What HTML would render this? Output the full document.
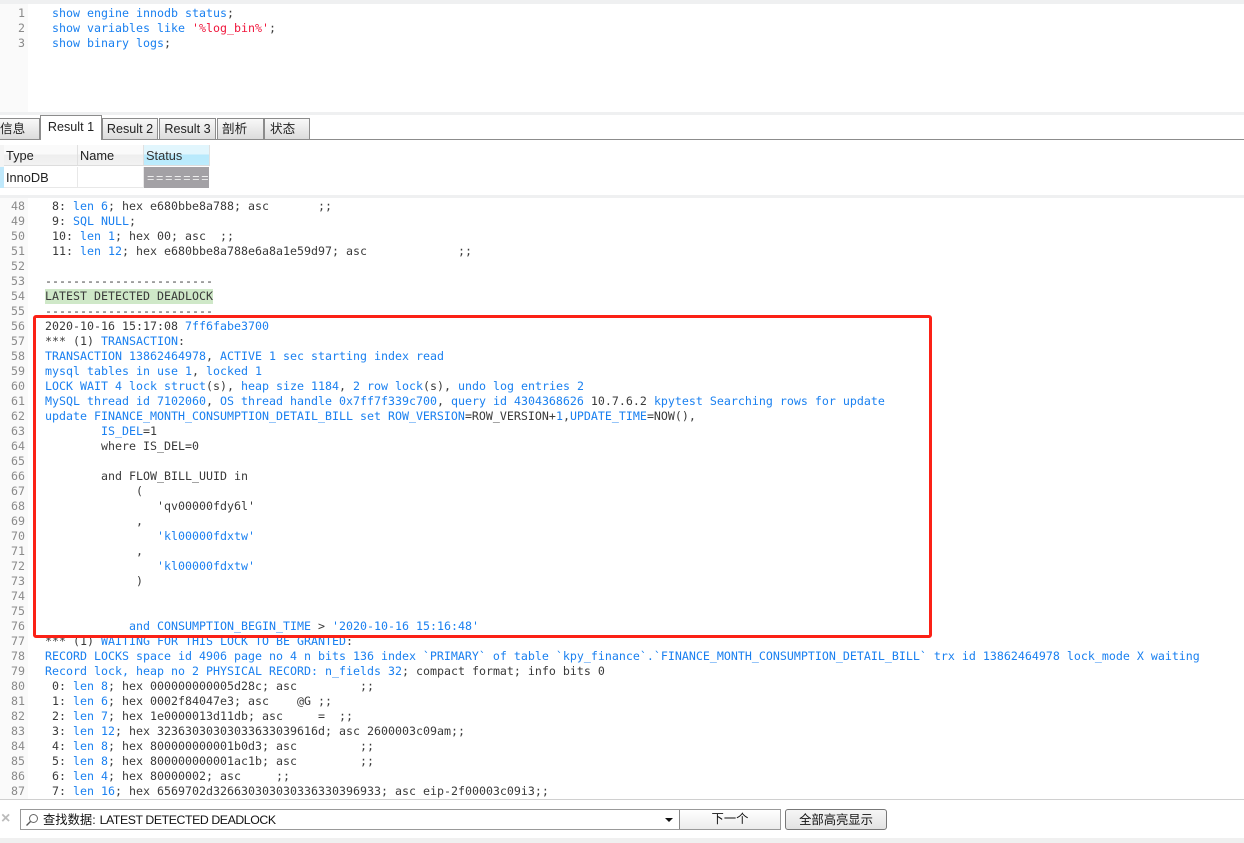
<!DOCTYPE html>
<html><head><meta charset="utf-8"><style>
*{box-sizing:border-box}
html,body{margin:0;padding:0;width:1244px;height:843px;overflow:hidden;background:#fff}
body{position:relative;font-family:"Liberation Sans","Noto Sans CJK SC",sans-serif;color:#222}
.a{position:absolute}
.l{position:absolute;left:45px;height:15px;font:11.63px/15px "DejaVu Sans Mono","Liberation Mono",monospace;white-space:pre;color:#3a3a3a}
.n{position:absolute;left:0;width:25px;text-align:right;font:11.63px/15px "DejaVu Sans Mono","Liberation Mono",monospace;color:#8a8a8a}
.l b{font-weight:normal;color:#1a80f0}
.l i{font-style:normal;color:#f0163c}
.tab{position:absolute;top:118px;height:21px;border:1px solid #8c8c8c;border-bottom:none;background:linear-gradient(#f8f8f8,#dcdcdc);font-size:12.6px;line-height:21px;text-align:center;color:#222;overflow:hidden}
.th{position:absolute;top:145px;height:21px;background:linear-gradient(#fafafa 0,#fafafa 45%,#eeeeee 50%,#f2f2f2);font-size:12.8px;line-height:22px;padding-left:2px;border-right:1px solid #e0e0e0;border-bottom:1px solid #ddd}
</style></head><body>
<div class="a" style="left:0;top:0;width:1244px;height:4px;background:#eff0f1"></div>
<div class="a" style="left:0;top:4px;width:28px;height:108px;background:#fafafa"></div>
<div class="a" style="left:0;top:112px;width:1244px;height:3px;background:#eff0f1"></div>
<div class="n" style="top:6px">1</div><div class="n" style="top:21px">2</div><div class="n" style="top:36px">3</div>
<div class="l" style="left:52px;top:6px"><b>show engine innodb status</b>;</div>
<div class="l" style="left:52px;top:21px"><b>show variables like</b> <i>'%log_bin%'</i>;</div>
<div class="l" style="left:52px;top:36px"><b>show binary logs</b>;</div>

<div class="a" style="left:0;top:139px;width:1244px;height:1px;background:#8c8c8c"></div>
<div class="tab" style="left:-30px;width:70px;text-align:left;padding-left:29px">信息</div>
<div class="tab" style="left:40px;top:115px;width:62px;height:25px;background:#fff;line-height:23px">Result 1</div>
<div class="tab" style="left:102px;width:56px">Result 2</div>
<div class="tab" style="left:159px;width:57px">Result 3</div>
<div class="tab" style="left:217px;width:47px;text-align:left;padding-left:4px">剖析</div>
<div class="tab" style="left:264px;width:46px;text-align:left;padding-left:5px">状态</div>

<div class="a" style="left:0;top:145px;width:4px;height:43px;background:#f4f4f4"></div>
<div class="a" style="left:0;top:167px;width:4px;height:21px;background:#bfe8fb"></div>
<div class="th" style="left:4px;width:74px">Type</div>
<div class="th" style="left:78px;width:66px">Name</div>
<div class="th" style="left:144px;width:66px;background:linear-gradient(#e2f6fd 0,#e2f6fd 45%,#b8e9fc 50%,#bcecfd);color:#333">Status</div>
<div class="a" style="left:4px;top:167px;width:74px;height:21px;border-right:1px solid #e8e8e8;border-bottom:1px solid #e8e8e8;font-size:12.8px;line-height:22px;padding-left:2px">InnoDB</div>
<div class="a" style="left:78px;top:167px;width:66px;height:21px;border-right:1px solid #e8e8e8;border-bottom:1px solid #e8e8e8"></div>
<div class="a" style="left:144px;top:167px;width:65px;height:21px;background:#a3a1a5;color:#eee;font-size:12.5px;line-height:22px;letter-spacing:1.75px;overflow:hidden;padding-left:3px;white-space:pre">=======</div>
<div class="a" style="left:0;top:195px;width:1244px;height:3px;background:#eff0f1"></div>

<div class="a" style="left:0;top:198px;width:28px;height:601px;background:#fafafa"></div>

<div class="n" style="top:199px">48</div><div class="l" style="top:199px"> 8: <b>len 6</b>; hex e680bbe8a788; asc       ;;</div>
<div class="n" style="top:214px">49</div><div class="l" style="top:214px"> 9: <b>SQL NULL</b>;</div>
<div class="n" style="top:229px">50</div><div class="l" style="top:229px"> 10: <b>len 1</b>; hex 00; asc  ;;</div>
<div class="n" style="top:244px">51</div><div class="l" style="top:244px"> 11: <b>len 12</b>; hex e680bbe8a788e6a8a1e59d97; asc             ;;</div>
<div class="n" style="top:259px">52</div>
<div class="n" style="top:274px">53</div><div class="l" style="top:274px">------------------------</div>
<div class="n" style="top:289px">54</div><div class="l" style="top:289px;background:#cfe8c8">LATEST DETECTED DEADLOCK</div>
<div class="n" style="top:304px">55</div><div class="l" style="top:304px">------------------------</div>
<div class="n" style="top:319px">56</div><div class="l" style="top:319px">2020-10-16 15:17:08 <b>7ff6fabe3700</b></div>
<div class="n" style="top:334px">57</div><div class="l" style="top:334px">*** (1) <b>TRANSACTION</b>:</div>
<div class="n" style="top:349px">58</div><div class="l" style="top:349px"><b>TRANSACTION 13862464978</b>, <b>ACTIVE 1 sec starting index read</b></div>
<div class="n" style="top:364px">59</div><div class="l" style="top:364px"><b>mysql tables in use 1</b>, <b>locked 1</b></div>
<div class="n" style="top:379px">60</div><div class="l" style="top:379px"><b>LOCK WAIT 4 lock struct</b>(s), <b>heap size 1184</b>, <b>2 row lock</b>(s), <b>undo log entries 2</b></div>
<div class="n" style="top:394px">61</div><div class="l" style="top:394px"><b>MySQL thread id 7102060</b>, <b>OS thread handle 0x7ff7f339c700</b>, <b>query id 4304368626</b> 10.7.6.2 <b>kpytest Searching rows for update</b></div>
<div class="n" style="top:409px">62</div><div class="l" style="top:409px"><b>update FINANCE_MONTH_CONSUMPTION_DETAIL_BILL set ROW_VERSION</b>=ROW_VERSION+<b>1</b>,<b>UPDATE_TIME</b>=NOW(),</div>
<div class="n" style="top:424px">63</div><div class="l" style="top:424px">        <b>IS_DEL</b>=1</div>
<div class="n" style="top:439px">64</div><div class="l" style="top:439px">        where IS_DEL=0</div>
<div class="n" style="top:454px">65</div>
<div class="n" style="top:469px">66</div><div class="l" style="top:469px">        and FLOW_BILL_UUID in</div>
<div class="n" style="top:484px">67</div><div class="l" style="top:484px">             (</div>
<div class="n" style="top:499px">68</div><div class="l" style="top:499px">                'qv00000fdy6l'</div>
<div class="n" style="top:514px">69</div><div class="l" style="top:514px">             ,</div>
<div class="n" style="top:529px">70</div><div class="l" style="top:529px">                <b>'kl00000fdxtw'</b></div>
<div class="n" style="top:544px">71</div><div class="l" style="top:544px">             ,</div>
<div class="n" style="top:559px">72</div><div class="l" style="top:559px">                <b>'kl00000fdxtw'</b></div>
<div class="n" style="top:574px">73</div><div class="l" style="top:574px">             )</div>
<div class="n" style="top:589px">74</div>
<div class="n" style="top:604px">75</div>
<div class="n" style="top:619px">76</div><div class="l" style="top:619px">            <b>and CONSUMPTION_BEGIN_TIME</b> &gt; <b>'2020-10-16 15:16:48'</b></div>
<div class="n" style="top:634px">77</div><div class="l" style="top:634px">*** (1) <b>WAITING FOR THIS LOCK TO BE GRANTED</b>:</div>
<div class="n" style="top:649px">78</div><div class="l" style="top:649px"><b>RECORD LOCKS space id 4906 page no 4 n bits 136 index `PRIMARY` of table `kpy_finance`.`FINANCE_MONTH_CONSUMPTION_DETAIL_BILL` trx id 13862464978 lock_mode X waiting</b></div>
<div class="n" style="top:664px">79</div><div class="l" style="top:664px"><b>Record lock, heap no 2 PHYSICAL RECORD: n_fields 32</b>; compact format; info bits 0</div>
<div class="n" style="top:679px">80</div><div class="l" style="top:679px"> 0: <b>len 8</b>; hex 000000000005d28c; asc         ;;</div>
<div class="n" style="top:694px">81</div><div class="l" style="top:694px"> 1: <b>len 6</b>; hex 0002f84047e3; asc    @G ;;</div>
<div class="n" style="top:709px">82</div><div class="l" style="top:709px"> 2: <b>len 7</b>; hex 1e0000013d11db; asc     =  ;;</div>
<div class="n" style="top:724px">83</div><div class="l" style="top:724px"> 3: <b>len 12</b>; hex 32363030303033633039616d; asc 2600003c09am;;</div>
<div class="n" style="top:739px">84</div><div class="l" style="top:739px"> 4: <b>len 8</b>; hex 800000000001b0d3; asc         ;;</div>
<div class="n" style="top:754px">85</div><div class="l" style="top:754px"> 5: <b>len 8</b>; hex 800000000001ac1b; asc         ;;</div>
<div class="n" style="top:769px">86</div><div class="l" style="top:769px"> 6: <b>len 4</b>; hex 80000002; asc     ;;</div>
<div class="n" style="top:784px">87</div><div class="l" style="top:784px"> 7: <b>len 16</b>; hex 6569702d326630303030336330396933; asc eip-2f00003c09i3;;</div>

<div class="a" style="left:33px;top:315px;width:899px;height:323px;border:3px solid #fb2116;border-radius:3px"></div>

<div class="a" style="left:0;top:799px;width:1244px;height:39px;background:#fff;border-top:1px solid #d0d0d0"></div>
<div class="a" style="left:0;top:838px;width:1244px;height:5px;background:#f0f0f0"></div>
<div class="a" style="left:1px;top:811px;font-size:16px;font-weight:bold;line-height:16px;color:#bbb">×</div>
<div class="a" style="left:20px;top:809px;width:761px;height:21px;border:1px solid #999;background:#fff"></div>
<svg class="a" style="left:25px;top:813px" width="14" height="14" viewBox="0 0 14 14"><circle cx="8.5" cy="5.5" r="4" fill="none" stroke="#666" stroke-width="1"/><path d="M5.5 8.5L1.5 12.5" stroke="#555" stroke-width="1.3"/></svg>
<div class="a" style="left:43px;top:811px;font-size:12.3px;line-height:19px;color:#111;white-space:pre">查找数据:<span style="letter-spacing:-.42px;margin-left:1px"> LATEST DETECTED DEADLOCK</span></div>
<div class="a" style="left:665px;top:818px;width:0;height:0;border-left:4px solid transparent;border-right:4px solid transparent;border-top:4px solid #111"></div>
<div class="a" style="left:679px;top:810px;width:101px;height:19px;border-left:1px solid #888;background:linear-gradient(#fff,#ececec);font-size:12.3px;line-height:19px;text-align:center;color:#111">下一个</div>
<div class="a" style="left:785px;top:809px;width:102px;height:21px;border:1px solid #777;border-radius:3px;background:linear-gradient(#f6f6f6,#e2e2e2);font-size:12.3px;line-height:20px;text-align:center;color:#111">全部高亮显示</div>
</body></html>
